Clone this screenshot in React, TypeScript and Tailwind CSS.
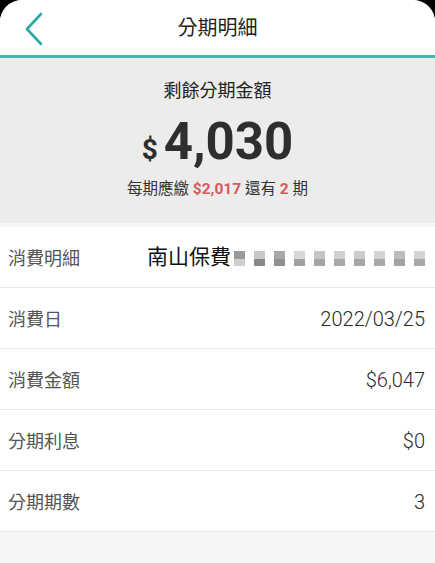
import React from "react";

const font = { fontFamily: 'Roboto, "Noto Sans CJK TC", sans-serif' };

function Row({ label, children }: { label: string; children: React.ReactNode }) {
  return (
    <div className="flex items-center justify-between h-[61px] pl-[8px] pr-[10px] pt-[2px] bg-white border-b border-[#e6e6e6]">
      <span className="text-[18px] text-[#555555]">{label}</span>
      <div className="text-[20px] font-light text-[#2a2a2a]">{children}</div>
    </div>
  );
}

const blur = [
  ["#9a9a9a", "#cfcfcf"],
  ["#c8c8c8", "#888888"],
  ["#a8a8a8", "#8f8f8f"],
  ["#d8d8d8", "#a0a0a0"],
  ["#c5c5c5", "#a5a5a5"],
  ["#d0d0d0", "#a8a8a8"],
  ["#cccccc", "#a6a6a6"],
  ["#d3d3d3", "#a9a9a9"],
  ["#bdbdbd", "#a2a2a2"],
  ["#d3d3d3", "#a8a8a8"],
];

export default function App() {
  return (
    <div className="w-[435px] h-[563px] bg-black overflow-hidden" style={font}>
      <div className="h-full bg-[#f6f6f6] rounded-t-[22px] overflow-hidden flex flex-col">
        <div className="relative h-[55px] bg-white flex items-center justify-center shrink-0">
          <svg className="absolute left-[24px] top-[12px]" width="20" height="34" viewBox="0 0 20 34">
            <path d="M17 2 L3 17 L17 32" fill="none" stroke="#2aa9a6" strokeWidth="2.6" strokeLinecap="round" strokeLinejoin="round" />
          </svg>
          <span className="text-[20px] text-[#222222]">分期明細</span>
        </div>
        <div className="h-[3px] bg-[#3fb4b5] shrink-0" />
        <div className="h-[165px] bg-[#ececec] flex flex-col items-center shrink-0">
          <div className="mt-[21px] text-[18px] text-[#222222] leading-[24px]">剩餘分期金額</div>
          <div className="flex items-baseline mt-[9px] leading-[60px] text-[#2e2e2e]">
            <span className="text-[28px] font-bold mr-[6px]">$</span>
            <span className="text-[51px] font-bold">4,030</span>
          </div>
          <div className="text-[15.5px] text-[#333333] -mt-[2px]">
            每期應繳 <span className="font-bold text-[#d25c5c]">$2,017</span> 還有 <span className="font-bold text-[#d25c5c]">2</span> 期
          </div>
        </div>
        <div className="h-[4px] bg-[#f6f6f6] shrink-0" />
        <div className="flex flex-col shrink-0">
          <Row label="消費明細">
            <div className="flex items-center">
              <span className="text-[21px] font-normal text-[#111111]">南山保費</span>
              <div className="flex items-center ml-[3px]">
                {blur.map((c, i) => (
                  <div key={i} className={`flex flex-col w-[11px] h-[15px] ${i < 9 ? "mr-[9px]" : ""}`}>
                    <div className="h-[8px]" style={{ background: c[0] }} />
                    <div className="h-[7px]" style={{ background: c[1] }} />
                  </div>
                ))}
              </div>
            </div>
          </Row>
          <Row label="消費日">2022/03/25</Row>
          <Row label="消費金額">$6,047</Row>
          <Row label="分期利息">$0</Row>
          <Row label="分期期數">3</Row>
        </div>
      </div>
    </div>
  );
}
